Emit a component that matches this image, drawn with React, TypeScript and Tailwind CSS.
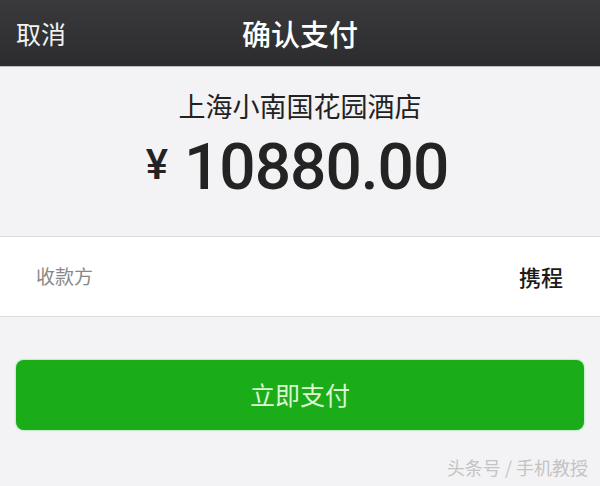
const cjk = "font-['Noto_Sans_CJK_SC','Noto_Sans',sans-serif]";

export default function App() {
  return (
    <div className={`relative h-[486px] w-[600px] overflow-hidden bg-[#f3f2f5] ${cjk}`}>
      {/* Top bar */}
      <div className="relative flex h-[67px] items-center justify-center border-b border-[#bdbdc0] bg-gradient-to-b from-[#3a393c] to-[#2c2b2e]">
        <span className="absolute left-[16px] top-[17px] text-[25px] leading-[32px] text-[#f2f2f2]">取消</span>
        <span className="text-[29px] leading-[36px] font-medium text-white">确认支付</span>
      </div>

      {/* Merchant + amount */}
      <div className="flex flex-col items-center pt-[21px]">
        <div className="text-[27px] leading-[36px] text-[#222]">上海小南国花园酒店</div>
        <div className="ml-[-6px] mt-[6px] flex items-center text-[#232323]">
          <span className="mr-[16px] mt-[-6px] font-['Roboto',sans-serif] text-[42px] font-medium leading-none">¥</span>
          <span className="font-['Roboto',sans-serif] text-[64px] font-medium leading-[76px] tracking-[-1px]">10880.00</span>
        </div>
      </div>

      {/* Payee row */}
      <div className="mt-[30px] flex h-[81px] items-center justify-between border-y border-[#dcdbe0] bg-white px-[36px] pr-[37px]">
        <span className="text-[19px] text-[#888]">收款方</span>
        <span className="text-[22px] font-medium text-[#1a1a1a]">携程</span>
      </div>

      {/* Pay button */}
      <div className="px-[16px] pt-[43px]">
        <div className="flex h-[70px] items-center justify-center rounded-[8px] bg-[#1aad19] shadow-[0_0_2px_#5ad75a]">
          <span className="text-[25px] text-[#dcf6d2]">立即支付</span>
        </div>
      </div>

      <div className="absolute bottom-[5px] right-[12px] text-[18px] text-[#c4c4c4]">头条号 / 手机教授</div>
    </div>
  );
}
